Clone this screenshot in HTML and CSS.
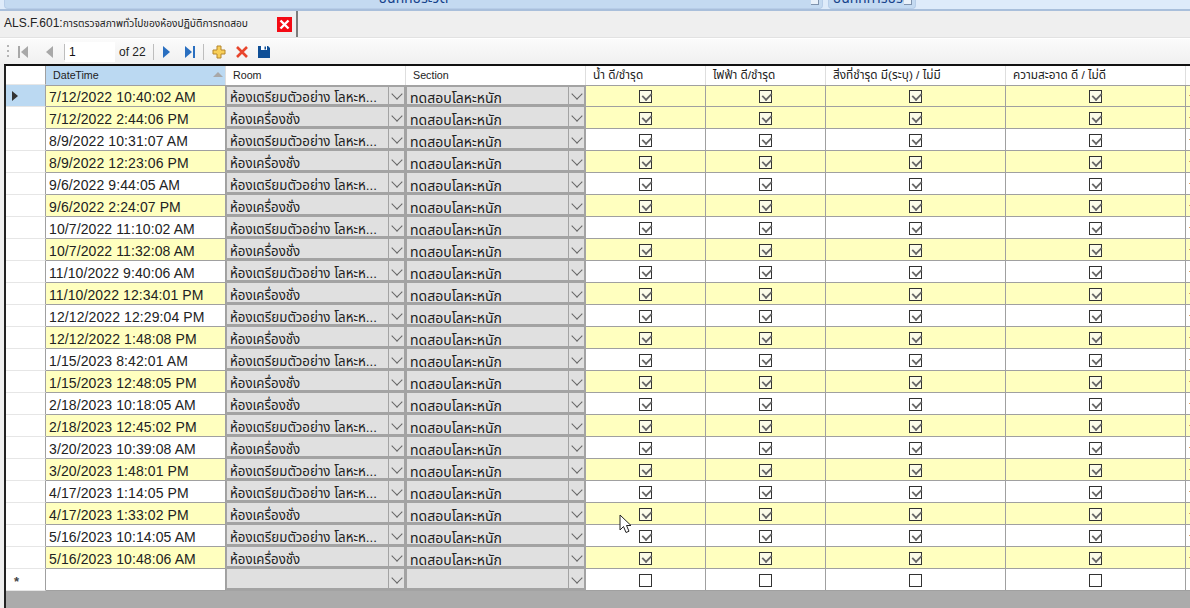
FILE: index.html
```html
<!DOCTYPE html>
<html lang="th">
<head>
<meta charset="utf-8">
<title>ALS.F.601</title>
<link rel="stylesheet" href="styles.css">
</head>
<body>
<div class="ribbon">
  <div class="rbtn main"><span>บันทึกประวัติ</span></div>
  <div class="rbtn side"><span>บันทึกการปรับ</span></div>
</div>
<div class="tabs">
  <div class="tab">
    <span class="tab-title">ALS.F.601:<span class="tab-th">การตรวจสภาพทั่วไปของห้องปฏิบัติการทดสอบ</span></span>
    <svg class="tab-close" viewBox="0 0 15 15"><rect width="15" height="15" fill="#f40a14"/><path d="M3.500 3.500l8 8M11.500 3.500l-8 8" stroke="#fff" stroke-width="2.400"/></svg>
  </div>
</div>
<div class="toolbar">
  <svg class="grip" viewBox="0 0 3 16"><path d="M0 1h2v2H0zM0 6h2v2H0zM0 11h2v2H0z" fill="#b5b5b5"/></svg>
  <svg class="ico" viewBox="0 0 12 14"><path d="M1 1h2v12H1z" fill="#a8a8a8"/><path d="M11 1v12L4 7z" fill="#a8a8a8"/></svg>
  <svg class="ico prev" viewBox="0 0 12 14"><path d="M8 1v12L1 7z" fill="#a8a8a8"/></svg>
  <span class="sep"></span>
  <span class="page">1</span>
  <span class="of">of 22</span>
  <span class="sep"></span>
  <svg class="ico next" viewBox="0 0 12 14"><path d="M3 1v12l7-6z" fill="#2a6fc0"/></svg>
  <svg class="ico last" viewBox="0 0 12 14"><path d="M1 1v12l7-6z" fill="#2a6fc0"/><path d="M9 1h2v12H9z" fill="#2a6fc0"/></svg>
  <span class="sep"></span>
  <svg class="ico add" viewBox="0 0 14 14"><path d="M5 1h4v4h4v4H9v4H5V9H1V5h4z" fill="#f8cf58" stroke="#b5862a"/></svg>
  <svg class="ico del" viewBox="0 0 14 14"><path d="M2 2l10 10M12 2L2 12" stroke="#e8452c" stroke-width="2.600"/></svg>
  <svg class="ico save" viewBox="0 0 14 14"><path d="M1 1h10l2 2v10H1z" fill="#0f4f96"/><path d="M4 1h6v4H4z" fill="#fff"/><path d="M7.500 1.500h1.500v3H7.500z" fill="#0f4f96"/></svg>
</div>
<div class="grid">
  <div class="row head">
    <div class="h rh"></div><div class="h sel">Date Time<em></em></div><div class="h">Room</div><div class="h">Section</div><div class="h th">น้ำ ดี/ชำรุด</div><div class="h th">ไฟฟ้า ดี/ชำรุด</div><div class="h th">สิ่งที่ชำรุด มี(ระบุ) / ไม่มี</div><div class="h th">ความสะอาด ดี / ไม่ดี</div><div class="h"></div>
  </div>
  <div class="row y"><div class="rh cur"></div><div class="d">7/12/2022 10:40:02 AM</div><div class="cb">ห้องเตรียมตัวอย่าง โลหะห...<i></i></div><div class="cb s">ทดสอบโลหะหนัก<i></i></div><div class="k"><b></b></div><div class="k"><b></b></div><div class="k"><b></b></div><div class="k"><b></b></div><div class="e"></div></div>
  <div class="row y"><div class="rh"></div><div class="d">7/12/2022 2:44:06 PM</div><div class="cb">ห้องเครื่องชั่ง<i></i></div><div class="cb s">ทดสอบโลหะหนัก<i></i></div><div class="k"><b></b></div><div class="k"><b></b></div><div class="k"><b></b></div><div class="k"><b></b></div><div class="e"></div></div>
  <div class="row"><div class="rh"></div><div class="d">8/9/2022 10:31:07 AM</div><div class="cb">ห้องเตรียมตัวอย่าง โลหะห...<i></i></div><div class="cb s">ทดสอบโลหะหนัก<i></i></div><div class="k"><b></b></div><div class="k"><b></b></div><div class="k"><b></b></div><div class="k"><b></b></div><div class="e"></div></div>
  <div class="row y"><div class="rh"></div><div class="d">8/9/2022 12:23:06 PM</div><div class="cb">ห้องเครื่องชั่ง<i></i></div><div class="cb s">ทดสอบโลหะหนัก<i></i></div><div class="k"><b></b></div><div class="k"><b></b></div><div class="k"><b></b></div><div class="k"><b></b></div><div class="e"></div></div>
  <div class="row"><div class="rh"></div><div class="d">9/6/2022 9:44:05 AM</div><div class="cb">ห้องเตรียมตัวอย่าง โลหะห...<i></i></div><div class="cb s">ทดสอบโลหะหนัก<i></i></div><div class="k"><b></b></div><div class="k"><b></b></div><div class="k"><b></b></div><div class="k"><b></b></div><div class="e"></div></div>
  <div class="row y"><div class="rh"></div><div class="d">9/6/2022 2:24:07 PM</div><div class="cb">ห้องเครื่องชั่ง<i></i></div><div class="cb s">ทดสอบโลหะหนัก<i></i></div><div class="k"><b></b></div><div class="k"><b></b></div><div class="k"><b></b></div><div class="k"><b></b></div><div class="e"></div></div>
  <div class="row"><div class="rh"></div><div class="d">10/7/2022 11:10:02 AM</div><div class="cb">ห้องเตรียมตัวอย่าง โลหะห...<i></i></div><div class="cb s">ทดสอบโลหะหนัก<i></i></div><div class="k"><b></b></div><div class="k"><b></b></div><div class="k"><b></b></div><div class="k"><b></b></div><div class="e"></div></div>
  <div class="row y"><div class="rh"></div><div class="d">10/7/2022 11:32:08 AM</div><div class="cb">ห้องเครื่องชั่ง<i></i></div><div class="cb s">ทดสอบโลหะหนัก<i></i></div><div class="k"><b></b></div><div class="k"><b></b></div><div class="k"><b></b></div><div class="k"><b></b></div><div class="e"></div></div>
  <div class="row"><div class="rh"></div><div class="d">11/10/2022 9:40:06 AM</div><div class="cb">ห้องเตรียมตัวอย่าง โลหะห...<i></i></div><div class="cb s">ทดสอบโลหะหนัก<i></i></div><div class="k"><b></b></div><div class="k"><b></b></div><div class="k"><b></b></div><div class="k"><b></b></div><div class="e"></div></div>
  <div class="row y"><div class="rh"></div><div class="d">11/10/2022 12:34:01 PM</div><div class="cb">ห้องเครื่องชั่ง<i></i></div><div class="cb s">ทดสอบโลหะหนัก<i></i></div><div class="k"><b></b></div><div class="k"><b></b></div><div class="k"><b></b></div><div class="k"><b></b></div><div class="e"></div></div>
  <div class="row"><div class="rh"></div><div class="d">12/12/2022 12:29:04 PM</div><div class="cb">ห้องเตรียมตัวอย่าง โลหะห...<i></i></div><div class="cb s">ทดสอบโลหะหนัก<i></i></div><div class="k"><b></b></div><div class="k"><b></b></div><div class="k"><b></b></div><div class="k"><b></b></div><div class="e"></div></div>
  <div class="row y"><div class="rh"></div><div class="d">12/12/2022 1:48:08 PM</div><div class="cb">ห้องเครื่องชั่ง<i></i></div><div class="cb s">ทดสอบโลหะหนัก<i></i></div><div class="k"><b></b></div><div class="k"><b></b></div><div class="k"><b></b></div><div class="k"><b></b></div><div class="e"></div></div>
  <div class="row"><div class="rh"></div><div class="d">1/15/2023 8:42:01 AM</div><div class="cb">ห้องเตรียมตัวอย่าง โลหะห...<i></i></div><div class="cb s">ทดสอบโลหะหนัก<i></i></div><div class="k"><b></b></div><div class="k"><b></b></div><div class="k"><b></b></div><div class="k"><b></b></div><div class="e"></div></div>
  <div class="row y"><div class="rh"></div><div class="d">1/15/2023 12:48:05 PM</div><div class="cb">ห้องเครื่องชั่ง<i></i></div><div class="cb s">ทดสอบโลหะหนัก<i></i></div><div class="k"><b></b></div><div class="k"><b></b></div><div class="k"><b></b></div><div class="k"><b></b></div><div class="e"></div></div>
  <div class="row"><div class="rh"></div><div class="d">2/18/2023 10:18:05 AM</div><div class="cb">ห้องเครื่องชั่ง<i></i></div><div class="cb s">ทดสอบโลหะหนัก<i></i></div><div class="k"><b></b></div><div class="k"><b></b></div><div class="k"><b></b></div><div class="k"><b></b></div><div class="e"></div></div>
  <div class="row y"><div class="rh"></div><div class="d">2/18/2023 12:45:02 PM</div><div class="cb">ห้องเตรียมตัวอย่าง โลหะห...<i></i></div><div class="cb s">ทดสอบโลหะหนัก<i></i></div><div class="k"><b></b></div><div class="k"><b></b></div><div class="k"><b></b></div><div class="k"><b></b></div><div class="e"></div></div>
  <div class="row"><div class="rh"></div><div class="d">3/20/2023 10:39:08 AM</div><div class="cb">ห้องเครื่องชั่ง<i></i></div><div class="cb s">ทดสอบโลหะหนัก<i></i></div><div class="k"><b></b></div><div class="k"><b></b></div><div class="k"><b></b></div><div class="k"><b></b></div><div class="e"></div></div>
  <div class="row y"><div class="rh"></div><div class="d">3/20/2023 1:48:01 PM</div><div class="cb">ห้องเตรียมตัวอย่าง โลหะห...<i></i></div><div class="cb s">ทดสอบโลหะหนัก<i></i></div><div class="k"><b></b></div><div class="k"><b></b></div><div class="k"><b></b></div><div class="k"><b></b></div><div class="e"></div></div>
  <div class="row"><div class="rh"></div><div class="d">4/17/2023 1:14:05 PM</div><div class="cb">ห้องเตรียมตัวอย่าง โลหะห...<i></i></div><div class="cb s">ทดสอบโลหะหนัก<i></i></div><div class="k"><b></b></div><div class="k"><b></b></div><div class="k"><b></b></div><div class="k"><b></b></div><div class="e"></div></div>
  <div class="row y"><div class="rh"></div><div class="d">4/17/2023 1:33:02 PM</div><div class="cb">ห้องเครื่องชั่ง<i></i></div><div class="cb s">ทดสอบโลหะหนัก<i></i></div><div class="k"><b></b></div><div class="k"><b></b></div><div class="k"><b></b></div><div class="k"><b></b></div><div class="e"></div></div>
  <div class="row"><div class="rh"></div><div class="d">5/16/2023 10:14:05 AM</div><div class="cb">ห้องเตรียมตัวอย่าง โลหะห...<i></i></div><div class="cb s">ทดสอบโลหะหนัก<i></i></div><div class="k"><b></b></div><div class="k"><b></b></div><div class="k"><b></b></div><div class="k"><b></b></div><div class="e"></div></div>
  <div class="row y"><div class="rh"></div><div class="d">5/16/2023 10:48:06 AM</div><div class="cb">ห้องเครื่องชั่ง<i></i></div><div class="cb s">ทดสอบโลหะหนัก<i></i></div><div class="k"><b></b></div><div class="k"><b></b></div><div class="k"><b></b></div><div class="k"><b></b></div><div class="e"></div></div>
  <div class="row new"><div class="rh star">*</div><div class="d"></div><div class="cb"><i></i></div><div class="cb s"><i></i></div><div class="k"><b class="off"></b></div><div class="k"><b class="off"></b></div><div class="k"><b class="off"></b></div><div class="k"><b class="off"></b></div><div class="e"></div></div>
</div>
<svg class="cursor" viewBox="0 0 13 21"><path d="M1 1v15l3.500-3.500 2.500 6 3-1.300-2.500-5.700H12z" fill="#fff" stroke="#222" stroke-width="1"/></svg>
</body>
</html>
```
FILE: styles.css
```css
* { box-sizing: border-box; }
html, body { margin: 0; height: 608px; overflow: hidden; }
body { background: #efefef; font-family: "Liberation Sans", "Noto Sans Thai", "Noto Sans", sans-serif; color: #111; display: flex; flex-direction: column; }

.ribbon { height: 11px; flex: none; display: flex; gap: 5px; padding: 0 0 0 4px; background: #deebfa; border-bottom: 2px solid #a9bfdb; overflow: hidden; }
.rbtn { height: 9px; background: #c4daf1; border: 1px solid #b7cde8; border-top: 0; border-radius: 0 0 4px 4px; display: flex; justify-content: center; align-items: flex-end; overflow: hidden; position: relative; }
.rbtn::after { content: ""; position: absolute; right: 3px; top: 0; width: 7px; height: 4px; background: #e9f1fa; border: solid #7f93ad; border-width: 0 1px 1px 0; }
.rbtn span { font-size: 14px; line-height: 16px; color: #15428b; margin-bottom: 2px; }
.main { width: 819px; }
.side { width: 88px; }

.tabs { height: 27px; flex: none; background: #efefef; border-bottom: 1px solid #e2e2e2; }
.tab { width: 298px; height: 26px; display: flex; align-items: center; padding-left: 4px; border-right: 2px solid #7c7c7c; }
.tab-title { width: 273px; font-size: 12px; white-space: nowrap; color: #222; }
.tab-th { font-size: 10.2px; }
.tab-close { width: 15px; height: 15px; flex: none; }

.toolbar { height: 26px; flex: none; display: flex; align-items: center; padding-left: 7px; background: linear-gradient(#fbfbfb, #f0f0f0); border-top: 1px solid #fff; }
.grip { width: 3px; height: 16px; margin-right: 7px; }
.ico { width: 12px; height: 14px; flex: none; }
.prev { margin-left: 16px; }
.sep { width: 1px; height: 16px; background: #bdbdbd; flex: none; margin-left: 7px; }
.page { width: 50px; height: 20px; background: #fff; font-size: 12px; line-height: 20px; padding-left: 4px; margin-right: 4px; }
.of { font-size: 12px; width: 27px; color: #222; white-space: nowrap; }
.next { margin-left: 6px; }
.last { margin-left: 12px; }
.add { margin-left: 8px; width: 14px; }
.del { margin-left: 9px; width: 14px; }
.save { margin-left: 8px; width: 14px; }

.grid { flex: 1; border-top: 2px solid #111; border-left: 2px solid #222; margin-left: 4px; background: #ababab; }
.row { display: grid; grid-template-columns: 40px 180px 180px 180px 120px 120px 180px 180px 1fr; grid-template-rows: 22px; height: 22px; background: #fff; }
.row.y > .d, .row.y > .k, .row.y > .e { background: #ffffbf; }
.row.head { height: 19px; grid-template-rows: 19px; background: #fff; }
.h { font-size: 10.7px; line-height: 19px; padding-left: 7px; border-right: 1px solid #dedede; white-space: nowrap; background: #fff; color: #222; }
.h.rh { padding: 0; }
.h.th { font-size: 11.8px; }
.h.sel { background: #bbd9f2; position: relative; word-spacing: -3px; }
.h.sel em { position: absolute; right: 2px; top: 6px; border: 5px solid transparent; border-top: 0; border-bottom: 5px solid #a8a8a8; }
.rh { background: #fff; border-right: 1px solid #a0a0a0; border-bottom: 1px solid #e6e6e6; }
.star { font-size: 13px; font-weight: bold; line-height: 26px; padding-left: 8px; color: #444; }
.cur { background: #bbd9f2; position: relative; }
.cur::after { content: ""; position: absolute; left: 6px; top: 6px; border: 5px solid transparent; border-left: 6px solid #333; border-right: 0; }
.d { font-size: 14px; line-height: 24px; padding-left: 3px; border-right: 1px solid #a0a0a0; border-bottom: 1px solid #a0a0a0; white-space: nowrap; letter-spacing: .1px; color: #222; }
.head + .row > .d, .head + .row > .k, .head + .row > .e { box-shadow: inset 0 1px 0 #a0a0a0; }
.head + .row > .cb { box-shadow: inset 0 2px 0 #a3a3a3; }
.cb { background: #e0e0e0; font-size: 13.3px; line-height: 26px; padding-left: 3px; border: solid #a3a3a3; border-width: 0 2px 3px 1px; position: relative; white-space: nowrap; color: #222; }
.cb i { position: absolute; right: 0; top: 0; bottom: 0; width: 16px; border-left: 1px solid #a3a3a3; }
.cb i::after { content: ""; position: absolute; left: 4px; top: 5px; width: 7px; height: 7px; border: solid #666; border-width: 0 1px 1px 0; transform: rotate(45deg); }
.s { font-size: 14px; }
.k { border-right: 1px solid #a0a0a0; border-bottom: 1px solid #a0a0a0; display: flex; justify-content: center; align-items: center; padding-top: 2px; }
.k b { width: 13px; height: 13px; border: 1px solid #333; background: #fff; position: relative; display: block; }
.row.y .k b { background: #fbfbe8; }
.k b::after { content: ""; position: absolute; left: 2px; top: 1px; width: 8px; height: 5px; border: solid #666; border-width: 0 0 2px 2px; transform: rotate(-45deg) scale(.9); }
.k b.off::after { display: none; }
.e { border-bottom: 1px solid #a0a0a0; }
.e::after { content: ""; display: block; width: 2px; height: 1px; margin: 10px 0 0 3px; background: #e0a060; }
.new .e::after { display: none; }
.cursor { position: absolute; left: 619px; top: 514px; width: 13px; height: 21px; }
```
